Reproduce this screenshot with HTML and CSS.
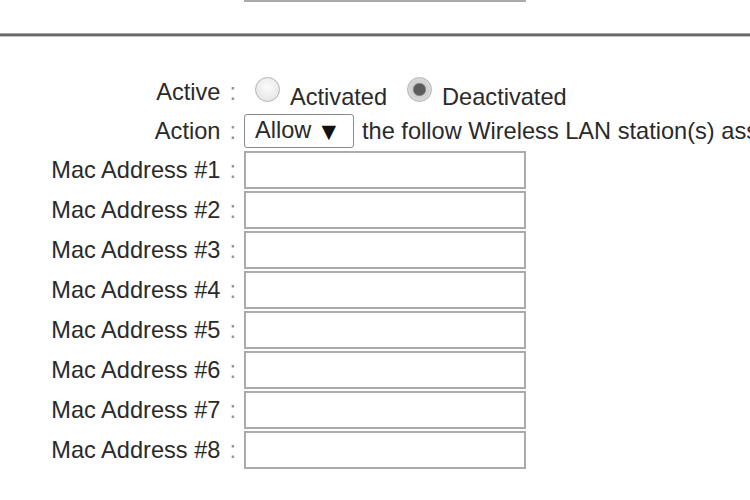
FILE: index.html
```html
<!DOCTYPE html>
<html>
<head>
<meta charset="utf-8">
<link rel="stylesheet" href="styles.css">
</head>
<body>
<div class="prev"></div>
<div class="rule"></div>
<div class="form">
  <div class="lbl">Active <span class="colon">:</span></div>
  <div class="cell options">
    <input type="radio" name="act" class="radio first">
    <span class="opt">Activated</span>
    <input type="radio" name="act" class="radio second" checked>
    <span class="opt">Deactivated</span>
  </div>

  <div class="lbl">Action <span class="colon">:</span></div>
  <div class="cell action">
    <span class="select">Allow <span class="arrow">▼</span></span>
    <span class="tail">the follow Wireless LAN station(s) association to the device</span>
  </div>

  <div class="lbl">Mac Address #1 <span class="colon">:</span></div>
  <div class="cell mac"><input type="text" class="box"></div>
  <div class="lbl">Mac Address #2 <span class="colon">:</span></div>
  <div class="cell mac"><input type="text" class="box"></div>
  <div class="lbl">Mac Address #3 <span class="colon">:</span></div>
  <div class="cell mac"><input type="text" class="box"></div>
  <div class="lbl">Mac Address #4 <span class="colon">:</span></div>
  <div class="cell mac"><input type="text" class="box"></div>
  <div class="lbl">Mac Address #5 <span class="colon">:</span></div>
  <div class="cell mac"><input type="text" class="box"></div>
  <div class="lbl">Mac Address #6 <span class="colon">:</span></div>
  <div class="cell mac"><input type="text" class="box"></div>
  <div class="lbl">Mac Address #7 <span class="colon">:</span></div>
  <div class="cell mac"><input type="text" class="box"></div>
  <div class="lbl">Mac Address #8 <span class="colon">:</span></div>
  <div class="cell mac"><input type="text" class="box"></div>
</div>
</body>
</html>
```
FILE: styles.css
```css
html, body {
  margin: 0;
  padding: 0;
  overflow: hidden;
  background: #ffffff;
}
body {
  font-family: "Liberation Sans", Arial, sans-serif;
  font-size: 23.6px;
  color: #2a2a2a;
  width: 750px;
  height: 500px;
}
.prev {
  margin-left: 244px;
  margin-top: -38px;
  width: 282px;
  height: 40px;
  box-sizing: border-box;
  border: 2px solid #aaaaaa;
}
.rule {
  margin-top: 31px;
  height: 2px;
  background: #686868;
  border-top: 1px solid #a6a6a6;
  border-bottom: 1px solid #c4c4c4;
}
.form {
  margin-top: 35px;
  display: grid;
  grid-template-columns: 236px 1fr;
  grid-template-rows: 40px 38px repeat(8, 40px);
  column-gap: 8px;
  white-space: nowrap;
}
.lbl {
  display: flex;
  align-items: center;
  justify-content: flex-end;
  color: #2a2a2a;
}
.colon {
  color: #8c939c;
  margin-left: 9px;
}
.cell {
  display: flex;
  align-items: center;
  min-width: 0;
}
.radio {
  -webkit-appearance: none;
  appearance: none;
  width: 25px;
  height: 25px;
  margin: -6px 0 0 0;
  border-radius: 50%;
  border: 1px solid #b4b4b4;
  box-sizing: border-box;
  background: radial-gradient(circle at 50% 40%, #fbfbfb 0, #e8e8e8 70%, #dedede 100%);
  flex: none;
}
.radio:checked {
  background: radial-gradient(circle at 50% 50%, #5c5c5c 0, #5c5c5c 5.5px, #cfcfcf 7px, #e6e6e6 100%);
}
.radio.first {
  margin-left: 11px;
}
.radio.second {
  margin-left: 20px;
}
.opt {
  margin-top: 10px;
  margin-left: 10px;
}
.select {
  box-sizing: border-box;
  width: 110px;
  height: 34px;
  border: 1px solid #8a8a8a;
  border-radius: 3px;
  padding-left: 10px;
  display: flex;
  align-items: center;
  margin-top: -1px;
  flex: none;
}
.arrow {
  font-family: "DejaVu Sans", sans-serif;
  font-size: 19px;
  margin-left: 10px;
  color: #111;
}
.tail {
  margin-left: 8px;
}
.mac {
  align-items: flex-start;
}
.box {
  box-sizing: border-box;
  width: 282px;
  height: 38px;
  margin: 1px 0 0 0;
  border: 2px solid #ababab;
  background: #fff;
  padding: 0;
}
```
